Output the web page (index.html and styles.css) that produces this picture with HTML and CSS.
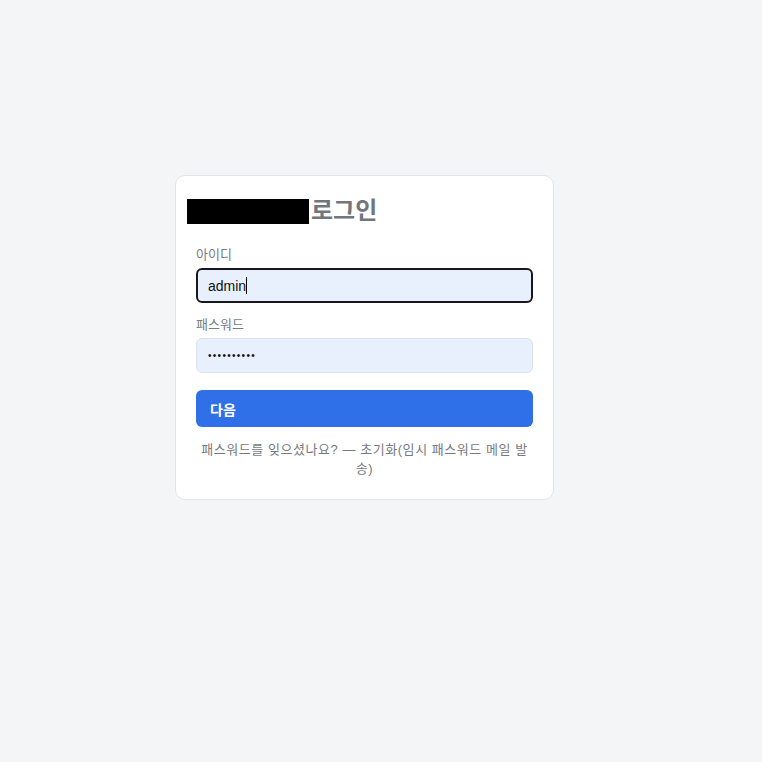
FILE: index.html
```html
<!DOCTYPE html>
<html lang="ko">
<head>
<meta charset="utf-8">
<title>로그인</title>
<link rel="stylesheet" href="styles.css">
</head>
<body>
<div class="card">
  <h1 class="title"><span class="redact"></span><span class="title-text">로그인</span></h1>
  <div class="field">
    <div class="label">아이디</div>
    <div class="input focused"><span class="value">admin</span><span class="caret"></span></div>
  </div>
  <div class="field second">
    <div class="label">패스워드</div>
    <div class="input"><span class="dots">••••••••••</span></div>
  </div>
  <button class="btn">다음</button>
  <p class="help">패스워드를 잊으셨나요? — 초기화(임시 패스워드 메일 발송)</p>
</div>
</body>
</html>
```
FILE: styles.css
```css
html, body {
  margin: 0;
  padding: 0;
}
body {
  background: #f4f5f7;
  font-family: "Liberation Sans", "Noto Sans CJK KR", Arial, sans-serif;
  width: 762px;
  height: 762px;
}
.card {
  box-sizing: border-box;
  width: 379px;
  margin: 175px 0 0 175px;
  background: #ffffff;
  border: 1px solid #e2e5e9;
  border-radius: 10px;
  padding: 21px 20px 21px 20px;
}
.title {
  display: flex;
  align-items: center;
  height: 28px;
  margin: 0 0 0 -9px;
  font-size: 24px;
  font-weight: 700;
  color: #71767d;
}
.redact {
  display: inline-block;
  width: 122px;
  height: 25px;
  background: #000;
  margin-right: 2px;
}
.title-text {
  line-height: 28px;
}
.field {
  margin-top: 21px;
}
.field.second {
  margin-top: 13px;
}
.label {
  font-size: 13px;
  line-height: 18px;
  color: #7a7d82;
  margin-bottom: 4px;
}
.input {
  box-sizing: border-box;
  height: 35px;
  background: #e8f0fe;
  border: 1px solid #dbe3ef;
  border-radius: 6px;
  padding: 0 11px;
  display: flex;
  align-items: center;
  font-size: 14px;
  color: #111;
}
.input.focused {
  border: 2px solid #16181b;
  padding: 0 10px;
}
.caret {
  display: inline-block;
  width: 1px;
  height: 17px;
  background: #000;
}
.dots {
  font-size: 10px;
  letter-spacing: 1.3px;
  color: #111;
}
.btn {
  display: block;
  box-sizing: border-box;
  width: 100%;
  height: 37px;
  margin-top: 17px;
  border: 0;
  border-radius: 6px;
  background: #2f6fe8;
  color: #fff;
  font-family: inherit;
  font-size: 14px;
  font-weight: 700;
  text-align: left;
  padding: 0 14px;
}
.help {
  margin: 13px 0 0 0;
  text-align: center;
  font-size: 13px;
  letter-spacing: 0.55px;
  line-height: 19px;
  color: #767a80;
}
```
